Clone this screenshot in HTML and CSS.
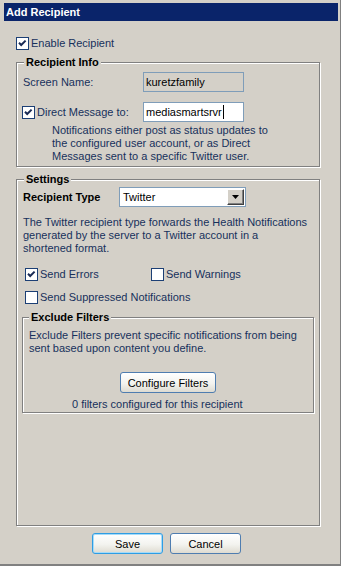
FILE: index.html
```html
<!DOCTYPE html>
<html lang="en">
<head>
    <meta charset="UTF-8">
    <title>Add Recipient</title>
    <link rel="stylesheet" href="styles.css">
</head>
<body>
    <div class="window">
        <div class="titlebar">Add Recipient</div>

        <div class="content">
            <label class="check">
                <span class="cb"><svg width="11" height="11" viewBox="0 0 11 11"><path d="M2 4.8 L4.2 7 L8.6 2.6" fill="none" stroke="#1a2b55" stroke-width="2"/></svg></span>
                Enable Recipient
            </label>

            <fieldset class="group info">
                <legend>Recipient Info</legend>
                <div class="row">
                    <span class="row-label">Screen Name:</span>
                    <span class="textbox readonly">kuretzfamily</span>
                </div>
                <div class="row dm-row">
                    <label class="check row-label dm-label">
                        <span class="cb"><svg width="11" height="11" viewBox="0 0 11 11"><path d="M2 4.8 L4.2 7 L8.6 2.6" fill="none" stroke="#1a2b55" stroke-width="2"/></svg></span>
                        Direct Message to:
                    </label>
                    <span class="textbox">mediasmartsrvr<span class="caret"></span></span>
                </div>
                <p class="note dm-note">Notifications either post as status updates to<br>the configured user account, or as Direct<br>Messages sent to a specific Twitter user.</p>
            </fieldset>

            <fieldset class="group settings">
                <legend>Settings</legend>
                <div class="row">
                    <span class="type-label">Recipient Type</span>
                    <div class="select">
                        <span class="select-value">Twitter</span>
                        <span class="select-arrow"><svg width="7" height="4" viewBox="0 0 7 4"><path d="M0 0 H7 L3.5 4 Z" fill="#000"/></svg></span>
                    </div>
                </div>
                <p class="note type-note">The Twitter recipient type forwards the Health Notifications<br>generated by the server to a Twitter account in a<br>shortened format.</p>

                <div class="send-options">
                    <label class="check">
                        <span class="cb"><svg width="11" height="11" viewBox="0 0 11 11"><path d="M2 4.8 L4.2 7 L8.6 2.6" fill="none" stroke="#1a2b55" stroke-width="2"/></svg></span>
                        Send Errors
                    </label>
                    <label class="check"><span class="cb"></span>Send Warnings</label>
                    <label class="check wide"><span class="cb"></span>Send Suppressed Notifications</label>
                </div>

                <fieldset class="group filters">
                    <legend>Exclude Filters</legend>
                    <p class="note">Exclude Filters prevent specific notifications from being<br>sent based upon content you define.</p>
                    <button class="btn configure">Configure Filters</button>
                    <p class="note filter-count">0 filters configured for this recipient</p>
                </fieldset>
            </fieldset>

            <div class="actions">
                <button class="btn btn-default">Save</button>
                <button class="btn">Cancel</button>
            </div>
        </div>
    </div>
</body>
</html>
```

FILE: styles.css
```css
* {
    margin: 0;
    padding: 0;
    box-sizing: border-box;
}

body {
    font-family: "Liberation Sans", Arial, sans-serif;
    font-size: 11px;
    line-height: 13px;
    color: #17305c;
    background: #d4d0c8;
}

.window {
    width: 341px;
    height: 566px;
    display: flex;
    flex-direction: column;
    padding: 3px 2px 10px 4px;
    background: #d4d0c8;
    border-right: 1px solid #808080;
    border-bottom: 2px solid #808080;
}

.titlebar {
    height: 18px;
    line-height: 18px;
    padding-left: 2px;
    background: #0a246a;
    color: #fff;
    font-weight: bold;
}

.content {
    flex: 1;
    display: flex;
    flex-direction: column;
    padding: 16px 18px 0 12px;
}

/* checkboxes */
.check {
    display: flex;
    align-items: center;
    gap: 2px;
    height: 13px;
    white-space: nowrap;
}

.cb {
    width: 13px;
    height: 13px;
    flex: none;
    border: 1px solid #1c3f75;
    background: #fff;
}

.cb svg {
    display: block;
}

/* group boxes */
.group {
    margin-top: 6px;
    padding: 3px 6px;
    border: 1px solid #808080;
    box-shadow: inset 1px 1px 0 #fff, 1px 1px 0 #fff;
}

.group legend {
    margin-left: 1px;
    padding: 0 2px;
    line-height: 13px;
    font-weight: bold;
    color: #000;
    background: #d4d0c8;
}

.row {
    display: flex;
    align-items: center;
    height: 20px;
}

.row-label {
    width: 120px;
    flex: none;
}

.dm-row {
    margin-top: 10px;
}

.dm-label {
    width: 121px;
    margin-left: -1px;
}

.textbox {
    width: 101px;
    height: 20px;
    padding-left: 2px;
    line-height: 18px;
    color: #000;
    background: #fff;
    border: 1px solid #7f9db9;
    white-space: nowrap;
}

.textbox.readonly {
    background: #d4d0c8;
}

.caret {
    display: inline-block;
    width: 1px;
    height: 14px;
    margin-left: 1px;
    vertical-align: -3px;
    background: #000;
}

.note {
    white-space: nowrap;
}

.dm-note {
    margin-top: 2px;
    padding-left: 29px;
}

/* settings */
.settings {
    flex: 1;
    padding-top: 1px;
}

.type-label {
    width: 96px;
    font-weight: bold;
    color: #000;
}

.select {
    display: flex;
    width: 127px;
    height: 20px;
    background: #fff;
    border: 1px solid #7f9db9;
    color: #000;
}

.select-value {
    flex: 1;
    padding-left: 3px;
    line-height: 18px;
}

.select-arrow {
    width: 17px;
    margin: 1px;
    display: flex;
    align-items: center;
    justify-content: center;
    background: #d4d0c8;
    border: 1px solid;
    border-color: #fff #404040 #404040 #fff;
    box-shadow: inset -1px -1px 0 #808080;
}

.type-note {
    margin-top: 9px;
}

.send-options {
    display: grid;
    grid-template-columns: 126px 1fr;
    row-gap: 10px;
    margin-top: 13px;
    padding-left: 2px;
}

.send-options .wide {
    grid-column: 1 / 3;
}

.filters {
    margin: 7px -1px 0;
    padding: 5px 6px 1px;
}

.filters legend {
    margin-left: 0;
}

.filter-count {
    margin-top: 5px;
    padding-left: 43px;
}

/* buttons */
.btn {
    height: 21px;
    font-family: inherit;
    font-size: 11px;
    color: #000;
    border: 1px solid #4f7db0;
    border-radius: 3px;
    background: linear-gradient(#ffffff, #f3f3ef 55%, #dedbd1);
}

.btn-default {
    border-color: #2e9de4;
    box-shadow: inset 0 0 0 1px #a6dbf8;
}

.configure {
    display: block;
    width: 96px;
    margin: 17px auto 0;
}

.actions {
    display: flex;
    justify-content: center;
    gap: 7px;
    margin-top: 7px;
    padding-right: 3px;
}

.actions .btn {
    width: 71px;
}
```
